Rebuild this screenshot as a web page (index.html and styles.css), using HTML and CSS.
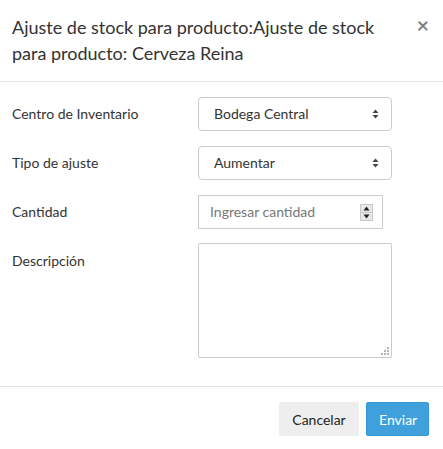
FILE: index.html
```html
<!DOCTYPE html>
<html lang="es">
<head>
<meta charset="utf-8">
<link rel="stylesheet" href="styles.css">
</head>
<body>
<div class="modal">
  <div class="modal-header">
    <h4 class="modal-title">Ajuste de stock para producto:Ajuste de stock para producto: Cerveza Reina</h4>
    <button class="close" type="button">×</button>
  </div>
  <div class="modal-body">
    <div class="form-group">
      <label class="control-label">Centro de Inventario</label>
      <div class="control select"><span>Bodega Central</span>
        <svg class="caret" width="7" height="10" viewBox="0 0 7 10"><path d="M3.5 0.5 L6.5 4 H0.5 Z M3.5 9.5 L6.5 6 H0.5 Z" fill="#444"/></svg>
      </div>
    </div>
    <div class="form-group">
      <label class="control-label">Tipo de ajuste</label>
      <div class="control select"><span>Aumentar</span>
        <svg class="caret" width="7" height="10" viewBox="0 0 7 10"><path d="M3.5 0.5 L6.5 4 H0.5 Z M3.5 9.5 L6.5 6 H0.5 Z" fill="#444"/></svg>
      </div>
    </div>
    <div class="form-group">
      <label class="control-label">Cantidad</label>
      <div class="control number"><span class="placeholder">Ingresar cantidad</span>
        <span class="spin">
          <span class="spin-btn"><svg width="7" height="5" viewBox="0 0 7 5"><path d="M3.5 0.5 L6.5 4.5 H0.5 Z" fill="#222"/></svg></span>
          <span class="spin-btn"><svg width="7" height="5" viewBox="0 0 7 5"><path d="M3.5 4.5 L6.5 0.5 H0.5 Z" fill="#222"/></svg></span>
        </span>
      </div>
    </div>
    <div class="form-group">
      <label class="control-label">Descripción</label>
      <div class="control textarea">
        <svg class="grip" width="8" height="8" viewBox="0 0 8 8"><g fill="#b5b5b5"><rect x="6" y="0" width="2" height="2"/><rect x="3" y="3" width="2" height="2"/><rect x="6" y="3" width="2" height="2"/><rect x="0" y="6" width="2" height="2"/><rect x="3" y="6" width="2" height="2"/><rect x="6" y="6" width="2" height="2"/></g></svg>
      </div>
    </div>
  </div>
  <div class="modal-footer">
    <button class="btn btn-default" type="button">Cancelar</button>
    <button class="btn btn-primary" type="button">Enviar</button>
  </div>
</div>
</body>
</html>
```
FILE: styles.css
```css
* { box-sizing: border-box; }
html, body { margin: 0; padding: 0; background: #fff; }
body { font-family: Lato, "Open Sans", sans-serif; font-size: 14px; color: #333; line-height: 1.42857; }
.modal { width: 443px; }
.modal-header { position: relative; padding: 15px 40px 15px 12px; border-bottom: 1px solid #e5e5e5; }
.modal-title { margin: 0; font-size: 18px; font-weight: 400; line-height: 25.7px; color: #333; }
.close { position: absolute; top: 14px; right: 14px; border: 0; background: none; padding: 0; font-family: Lato, sans-serif; font-size: 21px; font-weight: 700; line-height: 1; color: #000; opacity: 0.5; cursor: pointer; }
.modal-body { padding: 15px 12px 13px 12px; }
.form-group { display: flex; margin-bottom: 15px; }
.form-group:last-child { margin-bottom: 15px; }
.control-label { width: 186px; flex: none; padding-top: 7px; font-weight: 400; color: #333; }
.control { position: relative; height: 34px; background: #fff; border: 1px solid #ccc; display: flex; align-items: center; }
.select { width: 194px; border-radius: 4px; padding: 0 12px 0 15px; justify-content: space-between; color: #333; }
.caret { display: block; }
.number { width: 185px; padding: 0 12px 0 11px; justify-content: space-between; }
.placeholder { color: #777; }
.spin { display: flex; flex-direction: column; width: 13px; height: 17px; border: 1px solid #c8c8c8; background: #e8e8e8; margin-right: -3px; }
.spin-btn { flex: 1; display: flex; align-items: center; justify-content: center; }
.spin-btn + .spin-btn { border-top: 1px solid #c8c8c8; }
.textarea { width: 194px; height: 115px; border-radius: 2px; margin-top: -1px; }
.grip { position: absolute; right: 2px; bottom: 2px; }
.modal-footer { display: flex; justify-content: flex-end; gap: 7px; padding: 15px 14px 15px 12px; border-top: 1px solid #e5e5e5; }
.btn { height: 34px; padding: 0 12px; font-family: Lato, sans-serif; font-size: 14px; border-radius: 2px; cursor: pointer; }
.btn-default { width: 80px; background: #eee; border: 1px solid #eee; color: #222; }
.btn-primary { width: 63px; background: #3fa0dc; border: 1px solid #3598d8; color: #fff; }
```
